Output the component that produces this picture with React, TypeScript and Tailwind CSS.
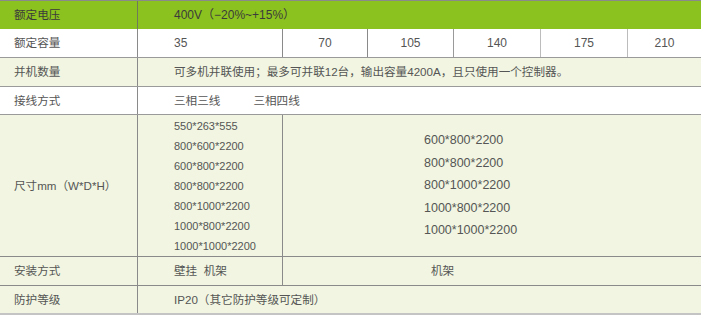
import React from 'react'

const font = { fontFamily: '"Liberation Sans", "Noto Sans CJK SC", sans-serif' }

const Label = ({ children }: { children: React.ReactNode }) => (
  <div className="w-[137px] shrink-0 flex items-center pl-[14px] text-[11.6px]">{children}</div>
)

const leftSizes = [
  '550*263*555',
  '800*600*2200',
  '600*800*2200',
  '800*800*2200',
  '800*1000*2200',
  '1000*800*2200',
  '1000*1000*2200',
]

const rightSizes = ['600*800*2200', '800*800*2200', '800*1000*2200', '1000*800*2200', '1000*1000*2200']

export default function App() {
  return (
    <div
      className="w-[701px] h-[315px] bg-white text-[12px] leading-none text-[#555] overflow-hidden"
      style={font}
    >
      {/* 额定电压 */}
      <div className="flex h-[29px] bg-[#8cc21f] border-t border-[#8a8a8a] text-[#3b3b3b]">
        <Label>额定电压</Label>
        <div className="flex-1 flex items-center border-l border-[#6f7a5a] pl-[36px]">400V（−20%~+15%）</div>
      </div>

      {/* 额定容量 */}
      <div className="flex h-[29px] bg-white border-b border-[#9a9a9a]">
        <Label>额定容量</Label>
        <div className="w-[145px] flex items-center border-l border-[#8a8a8a] pl-[36px]">35</div>
        <div className="w-[85px] flex items-center justify-center border-l border-[#8a8a8a]">70</div>
        <div className="w-[86px] flex items-center justify-center border-l border-[#8a8a8a]">105</div>
        <div className="w-[87px] flex items-center justify-center border-l border-[#9a9a9a]">140</div>
        <div className="w-[87px] flex items-center justify-center border-l border-[#bcbcbc]">175</div>
        <div className="flex-1 flex items-center justify-center border-l border-[#bcbcbc]">210</div>
      </div>

      {/* 并机数量 */}
      <div className="flex h-[29px] bg-[#f1f5e1] border-b border-[#9a9a9a]">
        <Label>并机数量</Label>
        <div className="flex-1 flex items-center border-l border-[#8a8a8a] pl-[36px] text-[11.6px]">
          可多机并联使用；最多可并联12台，输出容量4200A，且只使用一个控制器。
        </div>
      </div>

      {/* 接线方式 */}
      <div className="flex h-[28px] bg-white border-b border-[#9a9a9a]">
        <Label>接线方式</Label>
        <div className="flex-1 flex items-center border-l border-[#8a8a8a] pl-[36px] gap-[33px] text-[11.6px]">
          <span>三相三线</span>
          <span>三相四线</span>
        </div>
      </div>

      {/* 尺寸 */}
      <div className="flex h-[142px] bg-[#f1f5e1] border-b border-[#8a8a8a]">
        <Label>尺寸mm（W*D*H）</Label>
        <div className="w-[145px] flex flex-col justify-center border-l border-[#8a8a8a] pl-[36px] text-[11px] leading-[20px]">
          {leftSizes.map((s, i) => (
            <div key={i}>{s}</div>
          ))}
        </div>
        <div className="flex-1 flex flex-col justify-center border-l border-[#8a8a8a] pl-[141px] text-[12.5px] leading-[22.6px]">
          {rightSizes.map((s, i) => (
            <div key={i}>{s}</div>
          ))}
        </div>
      </div>

      {/* 安装方式 */}
      <div className="flex h-[29px] bg-[#f1f5e1] border-b border-[#8a8a8a] text-[11.6px]">
        <Label>安装方式</Label>
        <div className="w-[145px] flex items-center border-l border-[#8a8a8a] pl-[36px]">壁挂&nbsp;&nbsp;机架</div>
        <div className="flex-1 flex items-center border-l border-[#8a8a8a] pl-[148px]">机架</div>
      </div>

      {/* 防护等级 */}
      <div className="flex h-[29px] bg-[#f1f5e1] border-b-2 border-[#c4c4c4] text-[11.6px]">
        <Label>防护等级</Label>
        <div className="flex-1 flex items-center border-l border-[#8a8a8a] pl-[36px]">IP20（其它防护等级可定制）</div>
      </div>
    </div>
  )
}
